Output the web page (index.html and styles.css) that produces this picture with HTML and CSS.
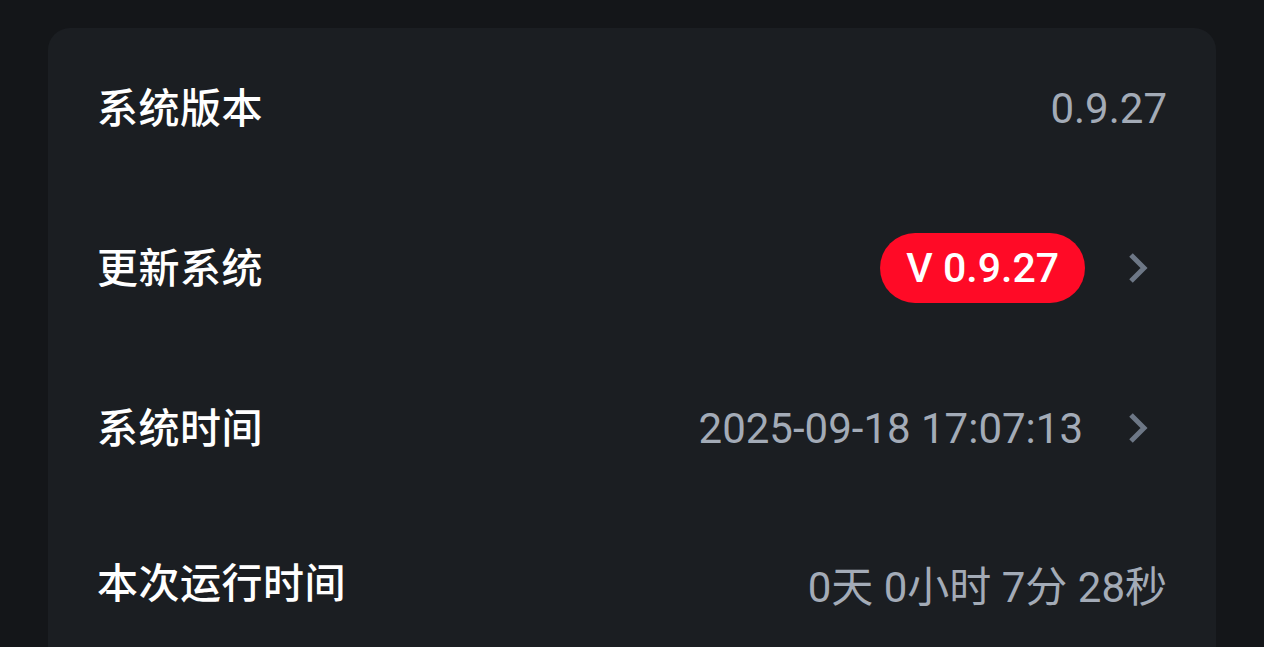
FILE: index.html
```html
<!DOCTYPE html>
<html lang="zh-CN">
<head>
<meta charset="utf-8">
<title>系统信息</title>
<link rel="stylesheet" href="styles.css">
</head>
<body>
<div class="page">
  <section class="card">
    <div class="row">
      <span class="label">系统版本</span>
      <span class="value">0.9.27</span>
    </div>
    <div class="row">
      <span class="label">更新系统</span>
      <div class="trail">
        <span class="badge">V 0.9.27</span>
        <svg class="chev" viewBox="0 0 48 48" width="48" height="48"><polyline points="12,11 25,24 12,37" fill="none" stroke="#6d7786" stroke-width="5" stroke-linejoin="miter" stroke-linecap="butt"/></svg>
      </div>
    </div>
    <div class="row">
      <span class="label">系统时间</span>
      <div class="trail">
        <span class="value">2025-09-18 17:07:13</span>
        <svg class="chev" viewBox="0 0 48 48" width="48" height="48"><polyline points="12,11 25,24 12,37" fill="none" stroke="#6d7786" stroke-width="5" stroke-linejoin="miter" stroke-linecap="butt"/></svg>
      </div>
    </div>
    <div class="row row-last">
      <span class="label">本次运行时间</span>
      <span class="value">0天 0小时 7分 28秒</span>
    </div>
  </section>
</div>
</body>
</html>
```

FILE: styles.css
```css
html, body {
  margin: 0;
  padding: 0;
  background: #141619;
  height: 100%;
  overflow: hidden;
}
.page {
  padding: 28px 48px 0 48px;
  font-family: Roboto, "Noto Sans CJK SC", sans-serif;
}
.card {
  background: #1b1e22;
  border-radius: 22px;
  padding: 0 49px;
  height: 700px;
}
.row {
  display: flex;
  align-items: center;
  justify-content: space-between;
  height: 160px;
}
.row-last {
  height: 150px;
}
.label {
  color: #ffffff;
  font-size: 41px;
  font-weight: 500;
  font-family: "Noto Sans CJK SC", sans-serif;
  letter-spacing: 0.5px;
  margin-top: -6px;
}
.value {
  color: #a3abb7;
  font-size: 42px;
  font-family: Roboto, "Noto Sans CJK SC", sans-serif;
}
.trail {
  display: flex;
  align-items: center;
  gap: 36px;
}
.badge {
  background: #ff0a26;
  color: #ffffff;
  font-size: 41px;
  font-weight: 500;
  height: 70px;
  line-height: 70px;
  padding: 0 26px;
  border-radius: 35px;
  box-sizing: border-box;
  margin-right: -2px;
}
.chev {
  display: block;
}
```
